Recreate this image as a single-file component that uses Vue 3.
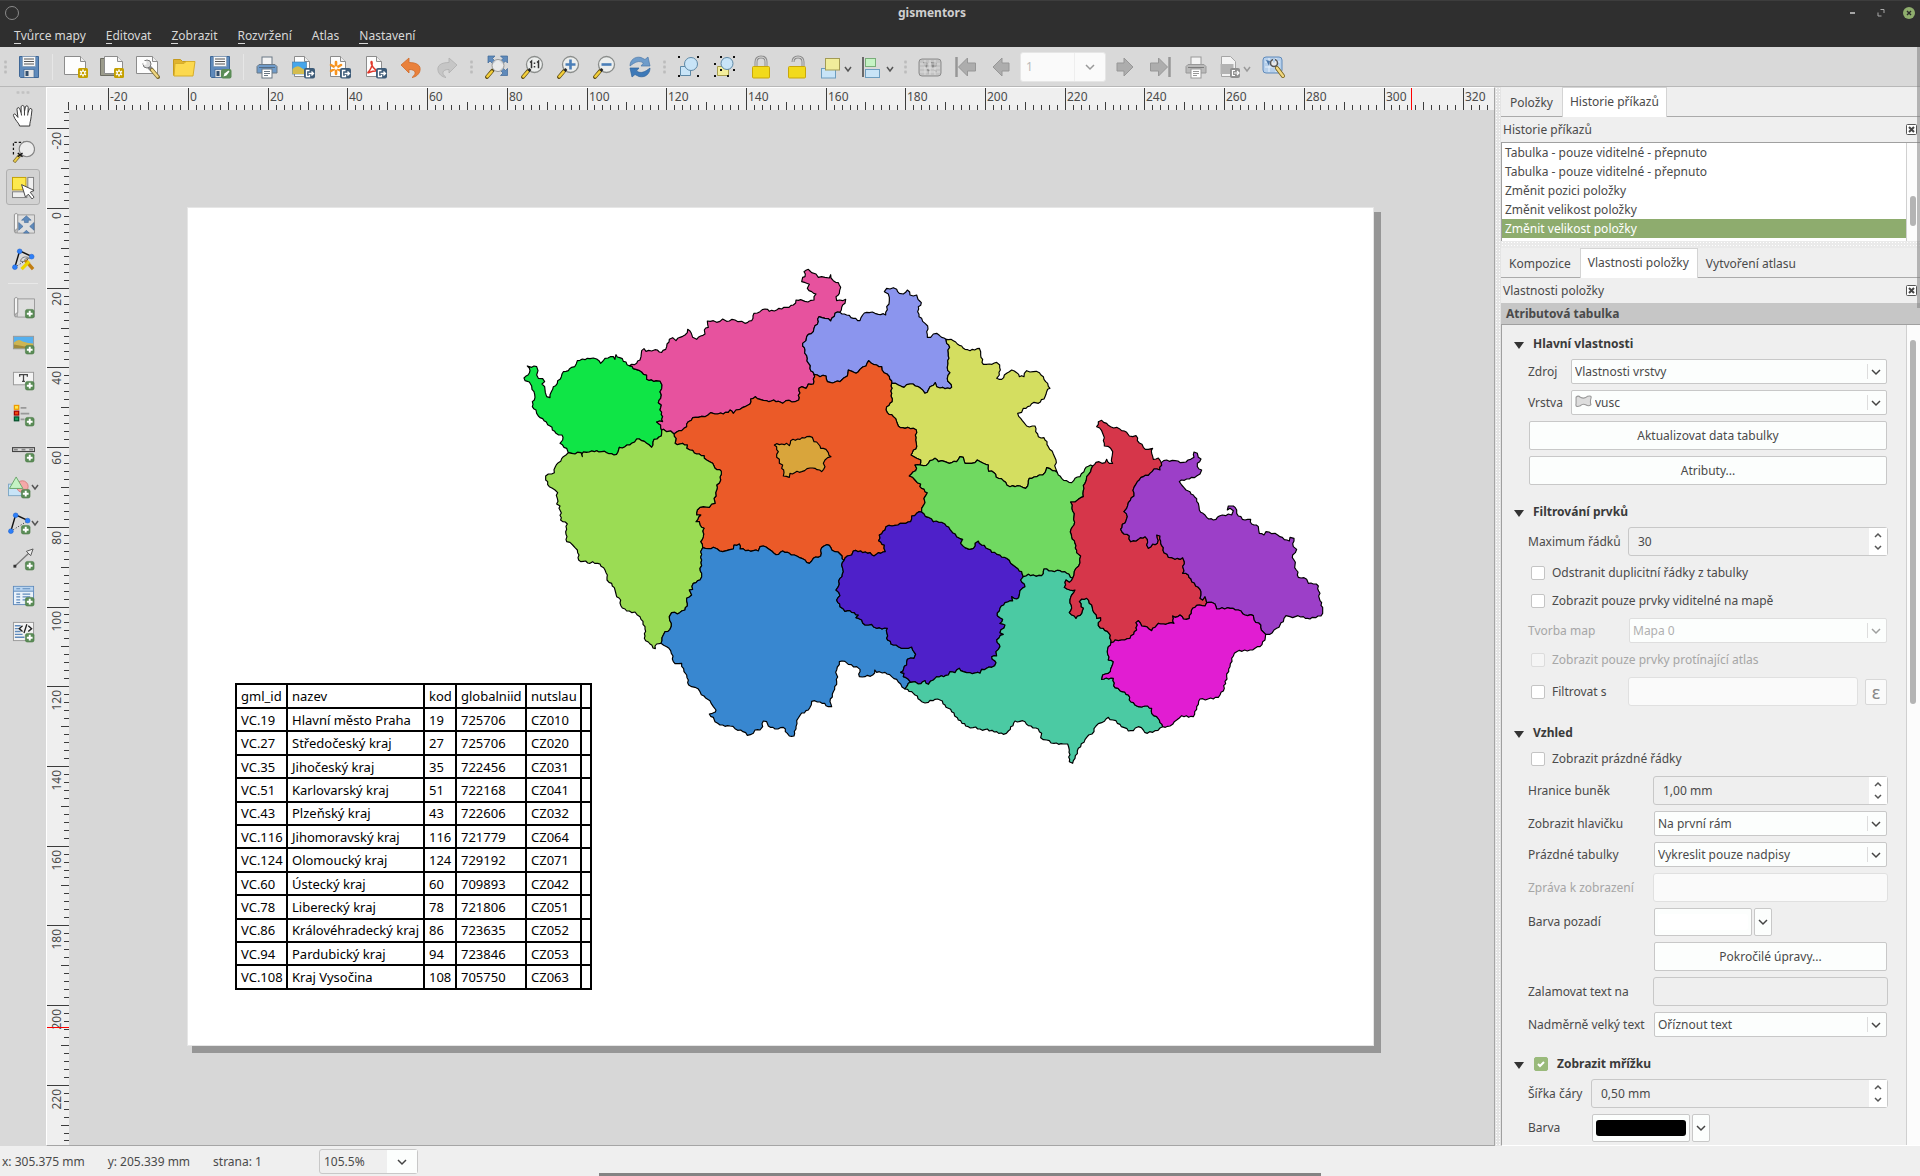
<script setup>
import { computed, onBeforeUnmount, onMounted, ref } from 'vue'

const menus = ['Tvůrce mapy', 'Editovat', 'Zobrazit', 'Rozvržení', 'Atlas', 'Nastavení']

const plus = '<rect x="14" y="14" width="9" height="9" rx="2" fill="#5a8c56" stroke="#4b7b48" stroke-width=".6"/><path d="M18.500 15.500v6M15.500 18.500h6" stroke="#fff" stroke-width="2"/>'
const star = '<rect x="14" y="13" width="10" height="10" rx="1.500" fill="#c4a000"/><path d="M19 14.500v7M16 16.200l6 3.600M22 16.200l-6 3.600" stroke="#fff" stroke-width="1.600"/><circle cx="19" cy="18" r="1.200" fill="#c4a000"/>'
const exp = '<rect x="13" y="13" width="11" height="10.500" rx="2" fill="#3d5b78"/><path d="M18.500 15.500h-3v6h3v-1.500M17.500 18.500h5M20.500 16.500l2 2-2 2" stroke="#fff" stroke-width="1.300" fill="none"/>'
const sheet = '<path d="M3.500 1.500h10l5 5v15h-15z" fill="#fdfdfd" stroke="#8c8c8c"/><path d="M13.500 1.500v5h5" fill="#eee" stroke="#8c8c8c"/>'
const floppy = '<path d="M2.500 1.500h19v21h-18l-1-1z" fill="#5f8abb" stroke="#3f6796"/><rect x="5.500" y="1.500" width="13" height="10" fill="#f8f8f8" stroke="#7a93ad" stroke-width=".6"/><path d="M7 4h10M7 6.500h10M7 9h10" stroke="#555"/><rect x="7" y="14.500" width="10" height="8" fill="#e4e4e4" stroke="#3f6796" stroke-width=".7"/><rect x="8.500" y="16" width="3" height="5" fill="#34506e"/>'
const handle = '<path d="M8.500 15.500L3 22" stroke="#5d4b12" stroke-width="3.800" stroke-linecap="round"/><path d="M7.800 16.500L3.300 21.600" stroke="#f4cf3a" stroke-width="2.400" stroke-linecap="round"/>'
const lens = handle + '<circle cx="14.500" cy="9.500" r="8" fill="#eceeed" stroke="#8a8d8b" stroke-width="1.300"/><path d="M8.500 16l2-2" stroke="#222" stroke-width="2.500"/>'
const printer = (b, g) => `<rect x="7" y="2" width="10" height="8" fill="#f3f3f3" stroke="${g}"/><path d="M4 9.500h16l2 2v6.500h-20v-6.500z" fill="${b}" stroke="${g}"/><path d="M4 12.500h16" stroke="#333" stroke-opacity=".45"/><rect x="7" y="14" width="10" height="9" fill="#fff" stroke="${g}"/><path d="M9 16.500h6M9 18.500h6M9 20.500h4" stroke="${g}"/>`
const nodes = '<path d="M3 20L8 3l13 6" fill="none" stroke="#111" stroke-width="1.500"/><path d="M3 20L21 9" stroke="#222" stroke-dasharray="1 2"/><g fill="#2d7ff9" stroke="#1d62cc" stroke-width=".6"><circle cx="3" cy="20" r="2.500"/><circle cx="8" cy="3.500" r="2.500"/><circle cx="20.500" cy="9" r="2.500"/></g>'
const scroll = '<path d="M5.500 3h18v19h-18z" fill="#dedede" stroke="#9a9a9a"/><path d="M2.500 2.500q2-2 3.500 0v15q-3.500 0-1.500 4.500-2 0-2-2z" fill="#f4f4f4" stroke="#8f8f8f"/>'
const corners = '<g fill="#111"><rect x="1" y="1" width="2" height="2"/><rect x="20" y="1" width="2" height="2"/><rect x="1" y="20" width="2" height="2"/><rect x="20" y="20" width="2" height="2"/></g>'
const lockBody = '<rect x="3.500" y="11.500" width="17" height="11.500" rx="1" fill="#f2da1b" stroke="#c9a70a"/>'
const arrowLeft = '<path d="M3 12l9-9v5h7v8h-7v5z" fill="#adadad" stroke="#979797"/>'
const arrowRight = '<path d="M21 12l-9-9v5H5v8h7v5z" fill="#adadad" stroke="#979797"/>'

const icons = {
  save: floppy,
  newPage: '<path d="M.500 1.500h16l5 5v13h-21z" fill="#fdfdfd" stroke="#8c8c8c"/><path d="M16.500 1.500v5h5" fill="#eee" stroke="#8c8c8c"/>' + star,
  duplicate: '<path d="M.500 3.500h17v17h-17z" fill="#9b9b8b" stroke="#6c6c62"/><path d="M4.500 1.500h13l5 5v12h-18z" fill="#fdfdfd" stroke="#8c8c8c"/><path d="M17.500 1.500v5h5" fill="#eee" stroke="#8c8c8c"/>' + star,
  manager: '<path d="M.500 1.500h16l5 5v12h-21z" fill="#fdfdfd" stroke="#8c8c8c"/><path d="M16.500 1.500v5h5" fill="#eee" stroke="#8c8c8c"/><path d="M13 12l3 3" stroke="#888" stroke-width="4"/><circle cx="11" cy="9" r="4" fill="#ddd" stroke="#777"/><path d="M6.500 5l4 1.500v3l-3 .5z" fill="#fdfdfd"/><path d="M16 15l6 7" stroke="#7b6a30" stroke-width="4" stroke-linecap="round"/><path d="M16 15l5.500 6.500" stroke="#eed580" stroke-width="2.400" stroke-linecap="round"/>',
  folder: '<path d="M1.500 20.500v-16h7l2 2h8v3" fill="#e0b32f" stroke="#c59a1d"/><path d="M3 8.500h9l2-2h9l-2 14.500H2z" fill="#fcd94f" stroke="#d6ad2b"/>',
  saveEdit: floppy + '<rect x="13" y="14" width="10.500" height="9.500" rx="2" fill="#5a8c56"/><path d="M15.500 21.500l1-3 4-3 1 1-3 4z" fill="#fff"/>',
  print: printer('#6f9bc9', '#6a7885'),
  image: sheet + '<rect x="1.500" y="7" width="14" height="12" fill="#45a5ea" stroke="#3d77a8" stroke-width=".6"/><path d="M1.500 19v-5q5-5 9-1l5 3v3z" fill="#d4bc4e"/>' + exp,
  svg: sheet + '<path d="M9 7v12M4 10l10 6M14 10l-10 6" stroke="#f7931e" stroke-width="2.600" stroke-linecap="round"/><circle cx="9" cy="13" r="1.700" fill="#fff"/>' + exp,
  pdf: sheet + '<path d="M4.500 18c3-3 5.500-8 4.500-11-1.500-2-2 4 5 9-5-.5-7 1.500-9.500 2" fill="none" stroke="#e0382c" stroke-width="1.500"/>' + exp,
  undo: '<path d="M2 10l8-7v4.500c8 0 12 3 11 8-.6 3.500-4 6.500-8 7 5-4 4-8-3-8V18z" fill="#e9813c" stroke="#cf6a28" stroke-width=".8"/>',
  redo: '<path d="M22 10l-8-7v4.500c-8 0-12 3-11 8 .6 3.500 4 6.500 8 7-5-4-4-8 3-8V18z" fill="#c6c6c6" stroke="#aeaeae" stroke-width=".8"/>',
  zoomFull: '<g fill="#5f8abb" stroke="#3f6796" stroke-width=".7"><path d="M4 1h7L8.500 3.500l3 3-2.500 2.500-3-3L4 8z"/><path d="M23.500 1h-7L19 3.500l-3 3L18.500 9l3-3 2 2z"/><path d="M23.500 20.500h-7L19 18l-3-3 2.500-2.500 3 3 2-2z"/></g>' + handle + '<circle cx="14" cy="10.500" r="6" fill="#ececec" fill-opacity=".85" stroke="#999"/>',
  zoomOne: lens + '<path d="M10 7.500l1.500-1.300v7M17 7.500l1.500-1.300v7" fill="none" stroke="#333" stroke-width="1.500"/><path d="M14.500 7.500v1.500M14.500 11v1.500" stroke="#333" stroke-width="1.500"/>',
  zoomIn: lens + '<path d="M14.500 4.500v10M9.500 9.500h10" stroke="#4b7fb8" stroke-width="2.600"/>',
  zoomOut: lens + '<path d="M9.500 9.500h10" stroke="#4b7fb8" stroke-width="2.600"/>',
  refresh: '<path d="M2 11C2 5 7 1 13 2.500l4 2L20 2l2 9h-9l2.500-3C11 5 7 7 2 11z" fill="#6f9cca" stroke="#4a78ab" stroke-width=".7"/><path d="M22 13c0 6-5 10-11 8.500l-4-2L4 22l-2-9h9l-2.500 3c4.500 3 8.500 1 13.500-3z" fill="#3d79b8" stroke="#2e6199" stroke-width=".7"/>',
  group: '<path d="M3.500 11.500h10v9h-10z" fill="#c8e4f7" stroke="#5d88a6"/><circle cx="14" cy="9" r="6.500" fill="#c8e4f7" stroke="#5d88a6"/>' + corners,
  ungroup: '<path d="M4.500 11.500h11v9h-11z" fill="#f4ee9b" stroke="#a69d4c"/><circle cx="14" cy="8.500" r="6" fill="#c8e4f7" stroke="#5d88a6"/><g fill="#111"><rect x="7" y="1" width="2" height="2"/><rect x="20" y="1" width="2" height="2"/><rect x="1" y="8" width="2" height="2"/><rect x="1" y="20" width="2" height="2"/><rect x="7" y="14" width="2" height="2"/><rect x="20" y="14" width="2" height="2"/><rect x="14" y="20" width="2" height="2"/></g>',
  lock: '<path d="M7 12V7q0-5 5-5t5 5v5" fill="none" stroke="#8d8d8d" stroke-width="3"/><path d="M7 12V7q0-5 5-5t5 5v5" fill="none" stroke="#dcdcdc"/>' + lockBody,
  unlock: '<path d="M8 7q0-5 5-5t5 5v5" fill="none" stroke="#8d8d8d" stroke-width="3"/><path d="M8 7q0-5 5-5t5 5v5" fill="none" stroke="#dcdcdc"/>' + lockBody,
  raise: '<rect x="1.500" y="13.500" width="14" height="9.500" fill="#c8e4f7" stroke="#6d9dbf"/><rect x="5.500" y="3.500" width="14" height="11.500" fill="#f1ed9b" stroke="#a39b54"/>',
  align: '<path d="M1 2v20" stroke="#444" stroke-width="1.500"/><rect x="3.500" y="3.500" width="10" height="8" fill="#c5f3c4" stroke="#7aae7a"/><rect x="3.500" y="14.500" width="14" height="8" fill="#c8e4f7" stroke="#6d9dbf"/>',
  atlas: '<rect x="1" y="4" width="22" height="17" rx="3" fill="#c3c3c3" stroke="#8b8b8b"/><path d="M5 7l5 1-1 5-2-1zM13 7l6 1-1 4-4 1zM9 14l3 1-2 4zM16 15l3 1-1 2z" fill="#8a8a8a"/><path d="M2 9h20M2 13h20M2 17h20M7 5v15M12 5v15M17 5v15" stroke="#e2e2e2" stroke-width=".8"/>',
  first: '<path d="M2.500 2v20" stroke="#979797" stroke-width="2.500"/><path d="M4.500 12l9-9v5h8v8h-8v5z" fill="#adadad" stroke="#979797"/>',
  prev: arrowLeft,
  next: arrowRight,
  last: '<path d="M21.500 2v20" stroke="#979797" stroke-width="2.500"/><path d="M19.500 12l-9-9v5h-8v8h8v5z" fill="#adadad" stroke="#979797"/>',
  printGray: printer('#b9b9b9', '#999'),
  exportGray: '<path d="M2.500 1.500h9l5 5v15h-14z" fill="#f3f3f3" stroke="#a5a5a5"/><rect x="1.500" y="9" width="13" height="10" fill="#b3b3b3"/><rect x="11" y="13" width="10" height="10" rx="2" fill="#8f8f8f"/><path d="M16 15.500h-2.500v5H16M15 18h5M18 16l2 2-2 2" stroke="#fff" stroke-width="1.200" fill="none"/>',
  atlasSettings: '<rect x="1" y="2" width="19" height="16" rx="3" fill="#b6cfea" stroke="#5f8abb"/><path d="M3 7h15M3 12h15M7 3v14M14 3v14" stroke="#e8f1fa"/><path d="M4 5l4 1-1 5zM13 11l4 2-3 3z" fill="#4a76a8"/><circle cx="12" cy="8" r="3.500" fill="#e8e8e8" stroke="#555" stroke-width="1.500"/><path d="M12 3.500v4" stroke="#b6cfea" stroke-width="2"/><path d="M15 13l6 8" stroke="#77621f" stroke-width="4" stroke-linecap="round"/><path d="M15 13l6 8" stroke="#f0d77f" stroke-width="2.400" stroke-linecap="round"/>',
  hand: '<path d="M8 23c-.5-3-5-6-6.500-11-.3-2 1.800-2 2.700-.5l2 2.500-1-8.500c0-2 2.300-2.300 2.900-.5L9.500 9V3c.3-2 2.800-2 3.200 0L13 8l1-5c.6-1.800 2.800-1.400 2.900.5L16.700 9l1.300-3.500c1-1.600 2.900-.8 2.800 1L20 13c-.3 4-1.500 6-1.500 10z" fill="#fff" stroke="#333" stroke-linejoin="round"/><path d="M9.500 9l.5 3M13 8v4M16.700 9l-.4 3" stroke="#333"/>',
  zoom: '<path d="M1.500 15V2.500H14" fill="none" stroke="#111" stroke-width="1.300" stroke-dasharray="2.500 2"/><path d="M8 16l-6 7" stroke="#7b6a30" stroke-width="3.500"/><path d="M7.500 16.500l-5 6" stroke="#eed04a" stroke-width="2"/><circle cx="15.500" cy="9.500" r="8" fill="#ececec" stroke="#858585" stroke-width="1.200"/><path d="M6 13.500l5 4M6 17.500l5-4" stroke="#111" stroke-width="1.500"/>',
  select: '<rect x="16.500" y="1.500" width="6" height="14" fill="#efefef" stroke="#808080"/><rect x=".500" y="16.500" width="15" height="6" fill="#efefef" stroke="#808080"/><rect x=".500" y="1.500" width="14" height="13" fill="#fde94e" stroke="#c4a000"/><path d="M10 9l4 13 3-3 4 5 2-2-4-5 4-2z" fill="#fff" stroke="#444"/>',
  moveContent: scroll + '<g fill="#5f8abb" stroke="#3f6796" stroke-width=".6"><path d="M15 4l5 4.500h-3V11h-4V8.500h-3zM7 11l4.500 4L7 19zM23 11l-4.500 4 4.500 4zM12 22l3-3 3 3z"/></g>',
  editNodes: nodes + '<path d="M9 14c0-5 7-6 9-3-4-1-5 1-5 3z" fill="#ddd" stroke="#777"/><path d="M14 13l8 9" stroke="#c17d11" stroke-width="3.500"/><path d="M18 14l-8 8" stroke="#edd400" stroke-width="3.500"/>',
  addMap: scroll + plus,
  addImage: '<rect x="1.500" y="4.500" width="21" height="13" fill="#55b0ee" stroke="#999"/><path d="M2 17v-6q5-5 9-1 6 2 11 2v5z" fill="#cdb552"/><path d="M2 13q10 2 20 3v1H2z" fill="#a18a3b"/>' + plus,
  addLabel: '<rect x="1.500" y="4.500" width="21" height="13" fill="#f3f3f3" stroke="#999"/><path d="M8 9V7h8v2M12 7v7M10.500 14h3" stroke="#444" stroke-width="1.300" fill="none"/>' + plus,
  addLegend: '<g stroke-width="1.300"><rect x="2.500" y="1.500" width="4.500" height="4" fill="#fce94f" stroke="#f09a00"/><rect x="2.500" y="7.500" width="4.500" height="4" fill="#ef4b12" stroke="#a40000"/><rect x="2.500" y="13.500" width="4.500" height="4" fill="#14a35d" stroke="#064f2c"/></g><path d="M9 4h6M9 10h9M9 16h4" stroke="#999" stroke-width="1.800"/>' + plus,
  addScale: '<rect x=".600" y="8" width="23" height="4" fill="#ddd" stroke="#444" stroke-width="1.200"/><path d="M2 10h4M10 10h4M18 10h4" stroke="#888" stroke-width="2"/>' + plus,
  addShape: '<rect x=".500" y="8.500" width="15" height="12" fill="#c8e4f7" stroke="#7fa8c5"/><circle cx="15" cy="11" r="6" fill="#f4a9a9" stroke="#d98080"/><path d="M8.500 1l7 12h-14z" fill="#c5f3c4" stroke="#6aa56a"/>' + plus,
  addNodes: nodes + plus,
  addArrow: '<path d="M3 19L18 5" stroke="#777" stroke-width="1.400"/><rect x="1.500" y="17.500" width="3" height="3" fill="#333"/><path d="M22 1l-2.500 7-4.500-4.500z" fill="#eee" stroke="#555"/>' + plus,
  addTable: '<rect x="1.500" y="2.500" width="21" height="19" fill="#eaf2fa" stroke="#5f8abb"/><rect x="2" y="3" width="20" height="4.500" fill="#b9d5f1"/><path d="M2 7.500h20" stroke="#5f8abb"/><path d="M4.500 5h4M11 5h8M4.500 10.500h4M11 10.500h8M4.500 13.500h4M11 13.500h8M4.500 16.500h4M11 16.500h4M4.500 19.500h4" stroke="#5f8abb" stroke-width="1.200"/>' + plus,
  addHtml: '<rect x="1.500" y="2.500" width="21" height="19" fill="#f3f3f3" stroke="#999"/><path d="M3 6h6M3 9h4M3 12h6M3 15h8M3 18h10" stroke="#5f8abb" stroke-width="1.500"/><path d="M11 6L7.500 9l3.500 3M17 6l3.500 3-3.500 3M15.500 4.500l-3 9" stroke="#222" stroke-width="1.400" fill="none"/>' + plus
}

const toolGroups = [
  [{ i: 'save', t: 'Uložit projekt' }],
  [{ i: 'newPage', t: 'Nové rozvržení' }, { i: 'duplicate', t: 'Duplikovat' }, { i: 'manager', t: 'Správce' }, { i: 'folder', t: 'Otevřít šablonu' }, { i: 'saveEdit', t: 'Uložit šablonu' }],
  [{ i: 'print', t: 'Tisk' }, { i: 'image', t: 'Export obrázku' }, { i: 'svg', t: 'Export SVG' }, { i: 'pdf', t: 'Export PDF' }, { i: 'undo', t: 'Zpět' }, { i: 'redo', t: 'Znovu' }],
  [{ i: 'zoomFull', t: 'Celý rozsah' }, { i: 'zoomOne', t: '100%' }, { i: 'zoomIn', t: 'Přiblížit' }, { i: 'zoomOut', t: 'Oddálit' }, { i: 'refresh', t: 'Obnovit' }],
  [{ i: 'group', t: 'Seskupit' }, { i: 'ungroup', t: 'Rozdělit' }, { i: 'lock', t: 'Zamknout' }, { i: 'unlock', t: 'Odemknout' }, { i: 'raise', t: 'Nahoru', drop: true }, { i: 'align', t: 'Zarovnat', drop: true }],
  [{ i: 'atlas', t: 'Náhled atlasu' }, { i: 'first', t: 'První' }, { i: 'prev', t: 'Předchozí' }]
]
const dividers = ['grip start', 'rule', 'rule', 'grip', 'grip', 'grip']
const toolsAfterPage = [{ i: 'next', t: 'Další' }, { i: 'last', t: 'Poslední' }, { i: 'printGray', t: 'Tisk atlasu' }, { i: 'exportGray', t: 'Export atlasu', drop: true }, { i: 'atlasSettings', t: 'Nastavení atlasu' }]

const sideTools = [
  [{ i: 'hand', t: 'Posun' }, { i: 'zoom', t: 'Lupa' }, { i: 'select', t: 'Výběr', on: true }, { i: 'moveContent', t: 'Posun obsahu' }, { i: 'editNodes', t: 'Úprava uzlů' }],
  [{ i: 'addMap', t: 'Mapa' }, { i: 'addImage', t: 'Obrázek' }, { i: 'addLabel', t: 'Popisek' }, { i: 'addLegend', t: 'Legenda' }, { i: 'addScale', t: 'Měřítko' }, { i: 'addShape', t: 'Tvar', drop: true }, { i: 'addNodes', t: 'Uzly', drop: true }, { i: 'addArrow', t: 'Šipka' }, { i: 'addTable', t: 'Tabulka' }, { i: 'addHtml', t: 'HTML' }]
]

const PX_PER_MM = 3.985
const hRuler = ref(null)
const vRuler = ref(null)
const rulerSize = ref({ w: 0, h: 0 })
function ticks(from, origin, length) {
  const out = []
  for (let mm = from; origin + mm * PX_PER_MM < length; mm += 2) {
    const pos = Math.round(origin + mm * PX_PER_MM)
    out.push({ mm, pos, label: mm % 20 === 0 && pos + 26 < length, size: mm % 20 === 0 ? 22 : mm % 10 === 0 ? 8 : 5 })
  }
  return out
}
const hTicks = computed(() => ticks(-30, 141, rulerSize.value.w))
const vTicks = computed(() => ticks(-24, 98, rulerSize.value.h))
const cursor = { x: 1364, y: 917 }
function measure() {
  rulerSize.value = { w: hRuler.value.clientWidth, h: vRuler.value.clientHeight }
}
onMounted(() => {
  measure()
  window.addEventListener('resize', measure)
})
onBeforeUnmount(() => window.removeEventListener('resize', measure))

/* Borders are kept as shared arcs; a region lists its arcs, negative = reversed. */
const arcs = {
  1: '205,608 200,595 180,580 188,570 186,555 168,550 150,528 132,512 115,498 108,480 97,470 97,455 105,442 102,425 95,408 88,396 75,392 72,384 84,375 90,362 82,348 95,352 110,350 114,362 110,375 115,385 128,386 134,395 126,402 134,410 136,428 140,440 150,443 154,425 160,410 172,400 184,380 190,365 205,362 215,352 224,350 232,332 270,326 290,327 302,340 315,325 340,320 345,328 348,314 388,347',
  2: '388,347 408,358 425,366 440,375 440,388 468,392 480,393 486,405 480,425 482,445 475,458 484,465 480,480 488,500 488,515 470,516 482,525 485,541',
  3: '485,541 484,558 462,568 455,592 440,580 425,572 410,567 395,580 375,590 358,592 354,606 342,615 320,608 290,602 268,606 250,606 247,620 243,608 225,612 205,608',
  4: '388,347 410,340 420,330 424,310 432,296 438,304 455,303 465,299 485,307 500,290 508,268 518,263 528,272 540,262 555,255 562,248 563,238 574,250 578,262 590,268 602,258 615,252 613,240 625,232 622,213 640,212 650,217 668,207 680,214 705,210 725,214 735,220 755,212 762,190 780,185 795,177 808,184 830,180 860,172 880,165 888,150 902,149 915,154 942,150 948,132 935,125 922,115 928,103 916,98 905,95 908,82 915,80 912,65 925,58 935,68 948,72 955,82 975,82 988,84 992,74 1000,92 1015,98 1022,112 1018,130 1008,140 1010,152 1037,148 1035,160 1025,172 1020,187',
  5: '1020,187 1005,190 992,213 975,205 957,200 955,215 942,235 940,245 920,260 918,272 908,280 915,300 922,325 930,355 942,373',
  6: '942,373 940,402 925,402 918,415 905,410 897,415 896,450 885,455 858,452 848,460 835,454 800,452 780,448 766,440 752,447 750,462 735,470 720,478 708,480 700,490 690,480 670,492 645,492 632,488 615,500 595,502 578,503 565,515 560,530 545,542 530,546 522,552',
  7: '522,552 512,543 500,545 490,538 485,541',
  8: '1020,187 1040,195 1060,205 1080,212 1088,195 1100,187 1125,190 1135,193 1157,195 1160,170 1168,152 1165,132 1153,125 1160,115 1180,113 1190,118 1198,130 1210,132 1222,120 1230,135 1250,135 1254,148 1264,158 1255,170 1257,200 1268,214 1283,228 1282,262 1292,262 1300,252 1310,250 1325,262 1338,268',
  9: '1338,268 1340,280 1349,292 1345,310 1344,340 1342,352 1350,368 1342,385 1355,412 1350,416 1320,414 1310,410 1306,398 1290,410 1285,420 1275,430 1268,420 1255,410 1230,402 1212,412 1195,405 1175,400',
  10: '1175,400 1168,380 1152,368 1145,350 1130,345 1112,338 1106,332 1098,348 1080,358 1068,370 1058,365 1045,360 1042,378 1030,385 1020,395 990,397 982,395 978,378 960,380 952,375 942,373',
  11: '1175,400 1175,430 1176,455 1160,470 1162,488 1180,500 1190,515 1195,528 1215,535 1240,535 1249,540 1247,570 1250,590 1240,600 1233,615 1250,625 1262,630 1260,645',
  12: '1260,645 1245,645 1250,655 1240,665 1228,678 1245,690 1262,702 1260,710 1282,728 1272,745 1275,758 1265,775 1265,786',
  13: '1265,786 1250,790 1235,798 1232,815 1210,820 1185,826 1158,830 1155,840 1138,855 1136,872 1153,885 1156,905 1135,908 1122,918 1110,908 1060,903 1055,915 1042,918 1032,932',
  14: '1032,932 1020,912 1005,905 992,892 980,884 965,893 962,918 940,925 928,940 915,930 905,925 890,918 868,910 848,903 828,914 815,903 805,896 790,888 780,890 775,903 745,901 720,897 718,882 702,885 700,897 680,902 668,905 652,897 640,892 625,896 608,893',
  15: '608,893 602,875 610,860 612,835 600,825 598,815 588,815 602,795 590,795 592,780 610,770 628,772 635,762 645,760 642,745 650,720 650,705 662,690 664,664 645,655 638,640 620,630 612,617 590,612 570,600 560,595 562,585 525,580 528,565 522,552',
  16: '205,608 190,620 175,638 166,650 163,668 137,678 137,690 148,710 165,720 173,728 170,762 180,768 182,810 202,822 197,845 200,875 218,885 232,900 236,930 270,940 278,935 300,942 315,960 322,975 321,990 335,1000 345,1020 348,1032 362,1050 363,1068 380,1083 405,1086 420,1100 435,1130 433,1165 450,1182 466,1196 470,1182 483,1180',
  17: '483,1180 490,1155 495,1145 510,1138 514,1120 508,1100 515,1088 532,1092 545,1083 555,1080 562,1060 560,1045 575,1035 568,1020 578,1018 580,1000 600,990 605,970 600,955 605,930 602,905 608,893',
  18: '483,1180 500,1190 512,1202 520,1235 525,1241 545,1240 552,1265 560,1275 566,1305 585,1312 600,1325 618,1345 630,1352 640,1370 648,1380 646,1386 628,1392 640,1402 645,1415 660,1425 690,1428 705,1436 722,1440 742,1456 760,1450 765,1440 780,1440 788,1430 790,1413 800,1415 805,1428 825,1437 850,1432 862,1450 868,1458 882,1458 888,1430 890,1412 900,1396 925,1380 930,1372 935,1354 960,1356 985,1370 995,1370 990,1355 1000,1325 1010,1295 1010,1260 1018,1235 1035,1234 1045,1243 1070,1250 1080,1258 1078,1280 1095,1280 1118,1275 1124,1260 1130,1267 1155,1267 1175,1280 1190,1288 1202,1302 1215,1317',
  19: '1215,1317 1222,1307 1232,1297',
  20: '1232,1297 1225,1288 1210,1280 1212,1270 1202,1267 1220,1245 1222,1228 1242,1225 1247,1213 1238,1200 1235,1191 1215,1195 1195,1190 1180,1185 1160,1165 1162,1135 1130,1135 1115,1123 1095,1125 1085,1110 1068,1103 1075,1095 1050,1082 1035,1084 1020,1070 1010,1050 1020,1037 1008,1020 1015,1010 1020,985 1030,965 1025,945 1032,932',
  21: '1338,268 1360,272 1372,282 1385,288 1395,298 1410,302 1438,295 1442,315 1450,343 1468,342 1490,337 1499,345 1498,375 1490,385 1505,388 1520,370 1535,360 1550,368 1558,380 1572,380 1580,362 1600,365 1618,368 1632,388 1650,415 1640,425 1635,440 1615,460 1602,457 1590,468 1570,475 1565,487 1553,490 1562,505 1572,518 1580,528 1605,528 1615,560 1632,563 1645,590 1660,612 1668,630 1667,655 1672,668',
  22: '1672,668 1658,662 1640,653 1635,668 1610,680 1588,685 1585,700 1577,715 1560,708 1530,710 1510,692 1495,685 1482,668 1466,664 1465,645 1450,640 1432,630 1415,640 1395,640 1390,622 1380,620 1370,635 1348,640 1335,635 1315,635 1305,625 1290,632 1285,640 1270,647 1260,645',
  23: '1672,668 1685,685 1700,692 1715,698 1725,685 1740,680 1752,665 1758,652 1772,645 1778,648',
  24: '1778,648 1772,665 1760,680 1755,700 1750,722 1750,740 1735,748 1725,756 1712,756 1716,775 1722,800 1722,825 1713,838 1715,860 1725,880 1730,908 1742,918 1740,938 1728,955 1722,975 1718,985',
  25: '1718,985 1700,970 1680,962 1655,963 1632,957 1625,977 1600,975 1585,973 1570,980',
  26: '1570,980 1565,965 1548,952 1532,940 1520,925 1500,915 1475,907 1465,897 1445,885 1435,873 1425,880 1420,895 1408,898 1395,893 1382,880 1388,868 1370,860 1358,848 1350,838 1335,822 1325,817 1300,815 1285,802 1265,786',
  27: '1570,980 1562,990 1575,1010 1560,1022 1558,1035 1550,1047 1535,1040 1538,1053 1515,1058 1500,1075 1492,1097 1508,1108 1500,1120 1515,1125 1500,1148 1510,1153 1490,1170 1500,1190 1488,1205 1490,1218 1475,1220 1488,1238 1475,1252 1445,1258 1440,1270 1410,1268 1390,1265 1378,1255 1365,1268 1350,1265 1345,1275 1310,1280 1300,1290 1285,1303 1275,1292 1255,1302 1245,1295 1232,1297',
  28: '1215,1317 1240,1330 1260,1350 1265,1355 1285,1357 1305,1348 1320,1350 1335,1365 1355,1385 1375,1410 1405,1430 1440,1437 1490,1445 1510,1453 1525,1443 1545,1413 1575,1415 1585,1427 1615,1437 1625,1450 1622,1463 1640,1470 1662,1480 1690,1482 1703,1482 1708,1500 1708,1535 1718,1540 1725,1525 1735,1495 1760,1462 1782,1445 1788,1428 1805,1418 1825,1402 1860,1423 1885,1443 1900,1442 1915,1430 1930,1440 1942,1450 1965,1442 1988,1430',
  29: '1988,1430 1978,1410 1970,1400 1955,1390 1955,1375 1935,1368 1915,1370 1900,1358 1888,1350 1885,1335 1860,1322 1845,1313 1840,1285 1805,1288 1808,1275 1825,1270 1835,1250 1840,1235 1825,1230 1822,1205 1825,1190 1833,1178',
  30: '1833,1178 1827,1150 1810,1135 1795,1127 1802,1103 1790,1105 1778,1080 1775,1065 1760,1045 1745,1047 1738,1055 1750,1075 1745,1090 1728,1105 1708,1088 1715,1075 1710,1050 1715,1035 1725,1020 1710,1020 1693,1012 1698,990 1708,997 1718,985',
  31: '1778,648 1788,637 1815,638 1820,628 1828,640 1838,640 1835,625 1838,605 1832,595 1813,588 1810,555 1805,542 1790,530 1795,515 1805,511 1820,520 1832,530 1850,532 1865,542 1880,547 1888,558 1908,557 1912,572 1930,592 1945,598 1958,595 1955,610 1960,628 1975,624 1984,638',
  32: '1984,638 1980,660 1962,657 1950,670 1930,680 1912,695 1902,712 1902,738 1885,758 1880,775 1872,785 1882,800 1878,812 1862,838 1872,852 1888,858 1892,875 1915,868 1935,860 1942,868 1940,885 1945,895 1958,882 1972,880 1970,855 1980,858 1982,880 1992,908 2005,922 2025,928 2048,923 2053,935 2048,970 2065,975 2075,995 2095,1012 2103,1025 2100,1045 2108,1050 2115,1040 2120,1058',
  33: '2120,1058 2115,1068 2098,1065 2078,1075 2068,1105 2050,1107 2040,1095 2025,1102 2018,1098 2022,1120 2005,1120 1990,1122 1975,1120 1965,1132 1955,1142 1940,1130 1925,1128 1915,1112 1908,1118 1910,1140 1890,1165 1865,1170 1845,1170 1833,1178',
  34: '1984,638 2000,630 2025,632 2050,637 2072,628 2082,622 2082,606 2092,610 2095,622 2103,627 2092,640 2092,650 2105,660 2100,672 2090,678 2060,687 2038,695 2045,705 2058,720 2070,725 2080,735 2095,760 2098,780 2115,795 2120,802 2140,810 2158,798 2185,792 2195,795 2200,782 2190,775 2182,780 2185,768 2200,768 2210,780 2215,798 2235,810 2252,808 2255,822 2275,830 2278,850 2292,855 2298,845 2325,850 2340,860 2368,873 2370,862 2382,865 2380,890 2390,898 2378,915 2385,945 2395,982 2420,988 2425,1000 2440,1002 2455,1008 2458,1045 2468,1080 2463,1098 2430,1107 2410,1100 2370,1100 2358,1097 2350,1115 2330,1135 2310,1153 2297,1153',
  35: '2297,1153 2284,1140 2282,1125 2262,1110 2260,1097 2235,1095 2215,1080 2190,1075 2150,1077 2145,1062 2135,1057 2120,1058',
  36: '2297,1153 2295,1170 2280,1190 2250,1200 2210,1205 2195,1225 2190,1250 2180,1280 2173,1315 2160,1335 2140,1347 2100,1347 2090,1370 2080,1400 2045,1397 2030,1410 2010,1428 1988,1430',
  37: '823,585 845,582 860,580 868,587 872,572 900,568 920,560 937,562 942,575 955,582 962,595 978,598 985,608 993,620 975,630 970,640 975,650 965,665 945,655 930,654 905,665 870,670 868,682 850,678 852,668 845,655 848,645 838,640 838,628 830,622 835,605 823,585'
}
const areas = [
  { name: 'Karlovarský kraj', fill: '#0fe546', arcs: [2, 3, 1] },
  { name: 'Ústecký kraj', fill: '#e7529e', arcs: [4, 5, 6, 7, -2] },
  { name: 'Liberecký kraj', fill: '#8b95ee', arcs: [8, 9, 10, -5] },
  { name: 'Královéhradecký kraj', fill: '#d4de60', arcs: [21, 22, -11, -9] },
  { name: 'Středočeský kraj', fill: '#eb5a28', arcs: [11, 12, 13, 14, 15, -6, -10] },
  { name: 'Plzeňský kraj', fill: '#9bdc54', arcs: [16, 17, 15, 7, 3] },
  { name: 'Jihočeský kraj', fill: '#3887d0', arcs: [18, 19, 20, 14, -17] },
  { name: 'Kraj Vysočina', fill: '#4e20c9', arcs: [-13, -26, 27, 20] },
  { name: 'Pardubický kraj', fill: '#70d961', arcs: [23, 24, 25, 26, -12, -22] },
  { name: 'Jihomoravský kraj', fill: '#4bcaa3', arcs: [28, 29, 30, 25, 27, -19] },
  { name: 'Olomoucký kraj', fill: '#d6364a', arcs: [31, 32, 33, 30, -24] },
  { name: 'Moravskoslezský kraj', fill: '#9c3fc8', arcs: [34, 35, -32] },
  { name: 'Zlínský kraj', fill: '#e11dd2', arcs: [36, 29, -33, -35] },
  { name: 'Hlavní město Praha', fill: '#d9a53b', arcs: [37] }
]
/* Break long straight stretches with a small repeatable offset. */
function roughen(line) {
  const p = line.split(' ').map(s => s.split(',').map(Number))
  const out = [p[0]]
  for (let k = 1; k < p.length; k++) {
    const [ax, ay] = p[k - 1]
    const [bx, by] = p[k]
    const len = Math.hypot(bx - ax, by - ay)
    const n = Math.floor(len / 7)
    for (let s = 1; s < n; s++) {
      const f = s / n
      const d = ((ax * 13 + by * 7 + s * 11) % 7) - 3
      out.push([Math.round(ax + (bx - ax) * f - (by - ay) / len * d), Math.round(ay + (by - ay) * f + (bx - ax) / len * d)])
    }
    out.push(p[k])
  }
  return out
}
const lines = Object.fromEntries(Object.entries(arcs).map(([k, v]) => [k, roughen(v)]))
const shape = ids => ids.flatMap(n => (n < 0 ? [...lines[-n]].reverse() : lines[n])).map(p => p.join()).join(' ')

const columns = ['gml_id', 'nazev', 'kod', 'globalniid', 'nutslau', '']
const rows = [
  ['VC.19', 'Hlavní město Praha', '19', '725706', 'CZ010', ''],
  ['VC.27', 'Středočeský kraj', '27', '725706', 'CZ020', ''],
  ['VC.35', 'Jihočeský kraj', '35', '722456', 'CZ031', ''],
  ['VC.51', 'Karlovarský kraj', '51', '722168', 'CZ041', ''],
  ['VC.43', 'Plzeňský kraj', '43', '722606', 'CZ032', ''],
  ['VC.116', 'Jihomoravský kraj', '116', '721779', 'CZ064', ''],
  ['VC.124', 'Olomoucký kraj', '124', '729192', 'CZ071', ''],
  ['VC.60', 'Ústecký kraj', '60', '709893', 'CZ042', ''],
  ['VC.78', 'Liberecký kraj', '78', '721806', 'CZ051', ''],
  ['VC.86', 'Královéhradecký kraj', '86', '723635', 'CZ052', ''],
  ['VC.94', 'Pardubický kraj', '94', '723846', 'CZ053', ''],
  ['VC.108', 'Kraj Vysočina', '108', '705750', 'CZ063', '']
]
const history = ['Tabulka - pouze viditelné - přepnuto', 'Tabulka - pouze viditelné - přepnuto', 'Změnit pozici položky', 'Změnit velikost položky', 'Změnit velikost položky']

const groups = [
  { id: 'source', title: 'Hlavní vlastnosti', fields: [
    { type: 'select', label: 'Zdroj', value: 'Vlastnosti vrstvy' },
    { type: 'select', label: 'Vrstva', value: 'vusc', layer: true },
    { type: 'button', value: 'Aktualizovat data tabulky', wide: true },
    { type: 'button', value: 'Atributy...', wide: true }] },
  { id: 'filter', title: 'Filtrování prvků', fields: [
    { type: 'spin', label: 'Maximum řádků', value: '30' },
    { type: 'check', label: 'Odstranit duplicitní řádky z tabulky' },
    { type: 'check', label: 'Zobrazit pouze prvky viditelné na mapě' },
    { type: 'select', label: 'Tvorba map', value: 'Mapa 0', off: true },
    { type: 'check', label: 'Zobrazit pouze prvky protínající atlas', off: true },
    { type: 'expression', label: 'Filtrovat s' }] },
  { id: 'look', title: 'Vzhled', fields: [
    { type: 'check', label: 'Zobrazit prázdné řádky' },
    { type: 'spin', label: 'Hranice buněk', value: '1,00 mm' },
    { type: 'select', label: 'Zobrazit hlavičku', value: 'Na první rám' },
    { type: 'select', label: 'Prázdné tabulky', value: 'Vykreslit pouze nadpisy' },
    { type: 'text', label: 'Zpráva k zobrazení', off: true },
    { type: 'color', label: 'Barva pozadí', value: '#ffffff' },
    { type: 'button', value: 'Pokročilé úpravy...' },
    { type: 'text', label: 'Zalamovat text na' },
    { type: 'select', label: 'Nadměrně velký text', value: 'Oříznout text' }] },
  { id: 'lattice', title: 'Zobrazit mřížku', checked: true, fields: [
    { type: 'spin', label: 'Šířka čáry', value: '0,50 mm' },
    { type: 'color', label: 'Barva', value: '#000000' }] }
]
</script>

<template>
  <div class="app">
    <header class="top">
      <div class="titlebar">
        <span class="app-dot"></span>
        <h1>gismentors</h1>
        <div class="win">
          <button type="button" aria-label="Minimalizovat"><svg viewBox="0 0 12 12"><path d="M3 6h5" stroke="#ccc" stroke-width="1.500" /></svg></button>
          <button type="button" aria-label="Obnovit"><svg viewBox="0 0 12 12"><path d="M5.500 2.500H9v3.500M3 5.500V9h3.500" stroke="#aaa" fill="none" /></svg></button>
          <button type="button" aria-label="Zavřít"><svg viewBox="0 0 12 12"><circle cx="6" cy="6" r="6" fill="#8fae6d" /><path d="M4 4l4 4M8 4l-4 4" stroke="#2b2b2b" stroke-width="1.400" /></svg></button>
        </div>
      </div>
      <nav class="menu">
        <button v-for="m in menus" :key="m" type="button"><span :class="{ key: m !== 'Atlas' }">{{ m[0] }}</span>{{ m.slice(1) }}</button>
      </nav>
    </header>

    <div class="toolbar">
      <template v-for="(g, gi) in toolGroups" :key="gi">
        <span class="sep" :class="dividers[gi]"></span>
        <button v-for="b in g" :key="b.i" type="button" class="tool" :class="{ drop: b.drop }" :aria-label="b.t">
          <svg class="ico" viewBox="0 0 24 24" v-html="icons[b.i]"></svg>
          <svg v-if="b.drop" class="tiny" viewBox="0 0 8 8"><path d="M1 2l3 4 3-4" fill="none" stroke="#555" stroke-width="1.500" /></svg>
        </button>
      </template>
      <div class="page-pick">
        <input type="text" value="1" aria-label="Stránka atlasu" disabled>
        <button type="button" aria-label="Vybrat stránku" disabled><svg viewBox="0 0 10 10"><path d="M1 3l4 4 4-4" fill="none" stroke="#999" stroke-width="1.500" /></svg></button>
      </div>
      <button v-for="b in toolsAfterPage" :key="b.i" type="button" class="tool" :class="{ drop: b.drop }" :aria-label="b.t">
        <svg class="ico" viewBox="0 0 24 24" v-html="icons[b.i]"></svg>
        <svg v-if="b.drop" class="tiny" viewBox="0 0 8 8"><path d="M1 2l3 4 3-4" fill="none" stroke="#999" stroke-width="1.500" /></svg>
      </button>
    </div>

    <div class="main">
      <aside class="side">
        <span class="side-dots"></span>
        <template v-for="(g, gi) in sideTools" :key="gi">
          <hr v-if="gi">
          <button v-for="b in g" :key="b.i" type="button" :class="{ on: b.on, drop: b.drop }" :aria-label="b.t">
            <svg class="ico" viewBox="0 0 24 24" v-html="icons[b.i]"></svg>
            <svg v-if="b.drop" class="tiny" viewBox="0 0 8 8"><path d="M1 2l3 4 3-4" fill="none" stroke="#555" stroke-width="1.500" /></svg>
          </button>
        </template>
      </aside>

      <section class="view">
        <svg ref="hRuler" class="ruler-h">
          <g v-for="t in hTicks" :key="t.mm">
            <rect :x="t.pos" :y="22 - t.size" width="1" :height="t.size" />
            <text v-if="t.label" :x="t.pos + 2" y="13">{{ t.mm }}</text>
          </g>
          <rect class="mark" :x="cursor.x" y="0" width="1" height="22" />
        </svg>
        <div class="lower">
          <svg ref="vRuler" class="ruler-v">
            <g v-for="t in vTicks" :key="t.mm">
              <rect :x="22 - t.size" :y="t.pos" :width="t.size" height="1" />
              <text v-if="t.label" text-anchor="end" :transform="`translate(14 ${t.pos + 4}) rotate(-90)`">{{ t.mm }}</text>
            </g>
            <rect class="mark" x="0" :y="cursor.y" width="22" height="1" />
          </svg>
          <div class="canvas">
            <div class="page">
              <svg class="map" viewBox="0 0 2520 1590" role="img" aria-label="Kraje">
                <polygon v-for="a in areas" :key="a.name" :points="shape(a.arcs)" :fill="a.fill" />
              </svg>
              <table>
                <colgroup><col class="c1"><col class="c2"><col class="c3"><col class="c4"><col class="c5"><col class="c6"></colgroup>
                <thead><tr><th v-for="c in columns" :key="c" scope="col">{{ c }}</th></tr></thead>
                <tbody><tr v-for="r in rows" :key="r[0]"><td v-for="(c, i) in r" :key="i">{{ c }}</td></tr></tbody>
              </table>
            </div>
          </div>
        </div>
      </section>

      <div class="splitter"></div>

      <aside class="dock">
        <div class="tabs">
          <button type="button">Položky</button>
          <button type="button" class="on">Historie příkazů</button>
        </div>
        <div class="dock-title"><h2>Historie příkazů</h2>
          <button type="button" aria-label="Zavřít panel"><svg viewBox="0 0 11 11"><rect x=".500" y=".500" width="10" height="10" rx="1" fill="#fff" stroke="#555" /><path d="M3 3l5 5M8 3l-5 5" stroke="#444" stroke-width="2" /></svg></button>
        </div>
        <div class="history">
          <ul><li v-for="(h, i) in history" :key="i" :class="{ on: i === history.length - 1 }">{{ h }}</li></ul>
          <div class="bar"><span class="thumb short"></span></div>
        </div>
        <div class="hsplit"></div>
        <div class="tabs second">
          <button type="button">Kompozice</button>
          <button type="button" class="on">Vlastnosti položky</button>
          <button type="button">Vytvoření atlasu</button>
        </div>
        <div class="dock-title"><h2>Vlastnosti položky</h2>
          <button type="button" aria-label="Zavřít panel"><svg viewBox="0 0 11 11"><rect x=".500" y=".500" width="10" height="10" rx="1" fill="#fff" stroke="#555" /><path d="M3 3l5 5M8 3l-5 5" stroke="#444" stroke-width="2" /></svg></button>
        </div>
        <h3 class="band">Atributová tabulka</h3>
        <div class="props">
          <form @submit.prevent>
            <section v-for="g in groups" :key="g.id" class="group" :class="g.id">
              <h4>
                <svg class="tri" viewBox="0 0 10 7"><path d="M0 0h10L5 7z" fill="#333" /></svg>
                <label v-if="g.checked"><input type="checkbox" checked>{{ g.title }}</label>
                <span v-else>{{ g.title }}</span>
              </h4>
              <div v-for="(f, fi) in g.fields" :key="fi" class="field" :class="[f.type, { off: f.off, wide: f.wide }]">
                <label v-if="f.type === 'check'"><input type="checkbox" :disabled="f.off">{{ f.label }}</label>
                <label v-else-if="f.type === 'expression'"><input type="checkbox">{{ f.label }}</label>
                <label v-else-if="f.label" :for="g.id + fi">{{ f.label }}</label>
                <span v-else-if="!f.wide"></span>

                <div v-if="f.type === 'select'" class="combo" :class="{ layer: f.layer }">
                  <select :id="g.id + fi" :disabled="f.off"><option>{{ f.value }}</option></select>
                  <svg v-if="f.layer" class="layer-ico" viewBox="0 0 16 12"><path d="M1 2q2-2 4 0 4 2 7-1 4-1 3 2-1 3 0 6-2 2-5 0-3-1-5 1-5 2-4-2z" fill="#ddd" stroke="#999" /></svg>
                  <svg class="chev" viewBox="0 0 10 10"><path d="M1 3l4 4 4-4" fill="none" stroke="#444" stroke-width="1.500" /></svg>
                </div>
                <button v-else-if="f.type === 'button'" type="button" class="push">{{ f.value }}</button>
                <div v-else-if="f.type === 'spin'" class="spinbox">
                  <input :id="g.id + fi" type="text" :value="f.value">
                  <div>
                    <button type="button" aria-label="Zvýšit"><svg viewBox="0 0 8 6"><path d="M1 5l3-3 3 3" fill="none" stroke="#555" stroke-width="1.500" /></svg></button>
                    <button type="button" aria-label="Snížit"><svg viewBox="0 0 8 6"><path d="M1 1l3 3 3-3" fill="none" stroke="#555" stroke-width="1.500" /></svg></button>
                  </div>
                </div>
                <input v-else-if="f.type === 'text'" :id="g.id + fi" type="text" class="entry" :disabled="f.off">
                <div v-else-if="f.type === 'expression'" class="expr">
                  <input type="text" class="entry" aria-label="Výraz filtru" disabled>
                  <button type="button" class="eps" aria-label="Výraz" disabled>ε</button>
                </div>
                <div v-else-if="f.type === 'color'" class="colour">
                  <button :id="g.id + fi" type="button" class="swatch"><span :style="{ background: f.value }"></span></button>
                  <button type="button" class="more" aria-label="Možnosti barvy"><svg viewBox="0 0 10 10"><path d="M1 3l4 4 4-4" fill="none" stroke="#444" stroke-width="1.500" /></svg></button>
                </div>
              </div>
            </section>
          </form>
          <div class="bar"><span class="thumb long"></span></div>
        </div>
      </aside>
    </div>

    <footer class="status">
      <span>x: 305.375 mm</span>
      <span>y: 205.339 mm</span>
      <span>strana: 1</span>
      <div class="zoom">
        <input type="text" value="105.5%" aria-label="Měřítko zobrazení">
        <button type="button" aria-label="Vybrat měřítko"><svg viewBox="0 0 10 10"><path d="M1 3l4 4 4-4" fill="none" stroke="#444" stroke-width="1.500" /></svg></button>
      </div>
    </footer>
    <span class="edge-right"></span>
    <span class="edge-bottom"></span>
  </div>
</template>

<style>
body { margin: 0; }
</style>

<style scoped>
* { box-sizing: border-box; }
.app {
  position: relative;
  display: flex;
  flex-direction: column;
  height: 100vh;
  overflow: hidden;
  background: #efefef;
  color: #4a4a4a;
  font: 12px/16px "Noto Sans", sans-serif;
}
button, input, select { font: inherit; color: inherit; margin: 0; padding: 0; border: 0; background: none; outline: 0; }
h1, h2, h3, h4, ul { margin: 0; padding: 0; font-size: 12px; font-weight: 400; list-style: none; }
svg { display: block; }

.top { flex: none; background: #2f2f2f; border-top: 1px solid #3d3d3d; color: #d8d8d8; height: 47px; }
.titlebar { display: flex; align-items: center; height: 23px; padding: 0 5px; }
.app-dot { width: 14px; height: 14px; margin-right: 5px; border: 1px solid #8a8a8a; border-radius: 50%; }
.titlebar h1 { flex: 1; text-align: center; font-weight: 700; color: #d0d0d0; }
.win { display: flex; gap: 16px; padding-left: 7px; }
.win button, .win svg { width: 12px; height: 12px; }
.menu { display: flex; padding: 1px 0 0 4px; }
.menu button { padding: 3px 10px; line-height: 16px; }
.menu .key { border-bottom: 1px solid #d8d8d8; display: inline-block; line-height: 14px; }

.toolbar { flex: none; display: flex; align-items: center; height: 40px; background: #d9d9d9; border-bottom: 1px solid #b8b8b8; }
.tool { flex: none; display: flex; align-items: center; justify-content: center; width: 36px; height: 38px; }
.tool.drop { width: 42px; }
.ico { flex: none; width: 24px; height: 24px; }
.tiny { width: 8px; height: 8px; margin-top: 4px; }
.sep { flex: none; width: 13px; }
.sep.start { width: 11px; }
.sep.grip { height: 16px; background: radial-gradient(circle, #bcbcbc 1px, transparent 2px) center / 5px 5px repeat-y; }
.sep.rule { width: 11px; height: 26px; background: linear-gradient(#e6e6e6, #e6e6e6) center / 1px 100% no-repeat; }
.page-pick { flex: none; display: flex; width: 86px; height: 30px; background: #fafafa; border: 1px solid #e6e6e6; border-radius: 3px; }
.page-pick input { width: 54px; padding-left: 5px; color: #b9b9b9; border-right: 1px solid #eee; }
.page-pick button { flex: 1; display: grid; place-items: center; }
.page-pick svg, .zoom svg, .more svg { width: 10px; height: 10px; }

.main { flex: 1; min-height: 0; display: flex; }
.side { flex: none; width: 46px; background: #d9d9d9; display: flex; flex-direction: column; align-items: center; }
.side-dots { width: 16px; height: 10px; background: radial-gradient(circle, #c2c2c2 1px, transparent 2px) center / 5px 5px repeat-x; }
.side button { flex: none; width: 34px; height: 36px; display: flex; align-items: center; justify-content: center; border: 1px solid transparent; border-radius: 3px; }
.side button.on { background: #d2d2d2; border-color: #b0b0b0; }
.side hr { width: 30px; height: 1px; margin: 6px 0 5px; border: 0; background: #e8e8e8; }
.side .ico { width: 23px; height: 23px; }
.side .tiny { margin: 0; }

.view { flex: 1; min-width: 0; display: flex; flex-direction: column; border-left: 1px solid #fff; border-top: 1px solid #fff; border-right: 1px solid #a5a5a5; border-bottom: 1px solid #a5a5a5; }
.ruler-h { flex: none; width: 100%; height: 22px; background: #efefef; }
.ruler-v { flex: none; width: 22px; height: 100%; background: #efefef; }
.ruler-h rect, .ruler-v rect { fill: #3c3c3c; }
.ruler-h .mark, .ruler-v .mark { fill: #f00; }
.view text { font-size: 12px; fill: #4a4a4a; }
.lower { flex: 1; min-height: 0; display: flex; }
.canvas { flex: 1; min-width: 0; overflow: hidden; background: #d7d7d7; padding: 98px 0 0 119px; }
.page { position: relative; width: 1185px; height: 837px; background: #fff; box-shadow: 0 0 0 1px #e6e6e6, 6px 6px 0 2px #969696; }
.map { position: absolute; left: 312px; top: 42px; width: 840px; height: 530px; }
.map polygon { stroke: #000; stroke-width: 3.5; stroke-linejoin: round; }
.page table { position: absolute; left: 47px; top: 475px; width: 355px; height: 307px; table-layout: fixed; border-collapse: collapse; color: #000; font-size: 13px; line-height: 16px; }
.page thead tr { height: 24px; }
.page th, .page td { padding: 0 0 0 4px; border: 2px solid #000; font-weight: 400; text-align: left; white-space: nowrap; }
.c1 { width: 51px; } .c2 { width: 137px; } .c3 { width: 32px; } .c4 { width: 70px; } .c5 { width: 55px; } .c6 { width: 10px; }

.splitter { flex: none; width: 6px; background: radial-gradient(circle, #fff 1px, transparent 1px) 0 0 / 3px 3px #e4e4e4; }
.hsplit { flex: none; height: 7px; background: radial-gradient(circle, #fff 1px, transparent 1px) 0 0 / 3px 3px #eaeaea; }
.dock { flex: none; width: 419px; display: flex; flex-direction: column; overflow: hidden; }
.tabs { flex: none; display: flex; height: 30px; border-bottom: 1px solid #aaa; }
.tabs button { padding: 2px 8px 0; border: 1px solid transparent; border-bottom: 0; }
.tabs button.on { background: #fff; border-color: #d4d4d4; margin-bottom: -1px; padding: 0 7px 2px; }
.tabs.second button { padding: 2px 8px 0 7px; }
.tabs.second button.on { padding: 0 8px 2px 7px; }
.dock-title { flex: none; display: flex; align-items: center; justify-content: space-between; height: 25px; padding: 0 3px 0 2px; }
.dock-title svg { width: 11px; height: 11px; }
.history { flex: none; display: flex; height: 99px; border-top: 1px solid #a0a0a0; border-left: 1px solid #a0a0a0; background: #fff; }
.history ul { flex: 1; }
.history li { height: 19px; line-height: 19px; padding-left: 3px; }
.history li.on { background: #8eac6e; color: #fff; }
.bar { flex: none; width: 14px; border-left: 1px solid #d0d0d0; background: #fcfcfc; }
.thumb { display: block; width: 6px; margin-left: 3px; border-radius: 3px; background: #b4b4b4; }
.thumb.short { height: 30px; margin-top: 53px; }
.thumb.long { height: 364px; margin-top: 15px; }
.band { flex: none; height: 22px; line-height: 21px; padding-left: 5px; background: #c6c6c6; border-bottom: 1px solid #a0a0a0; font-weight: 700; }
.props { flex: 1; min-height: 0; display: flex; border-left: 1px solid #a0a0a0; border-bottom: 1px solid #fff; }
.props form { flex: 1; padding: 4px 18px 0 26px; overflow: hidden; }

.group { display: flex; flex-direction: column; gap: 6px; margin-bottom: 12px; }
h4 { display: flex; align-items: center; gap: 9px; height: 30px; margin: 0 0 -6px -14px; font-weight: 700; color: #3a3a3a; }
.tri { width: 10px; height: 7px; margin-top: 3px; }
.group label { display: flex; align-items: center; white-space: nowrap; }
.field { display: grid; grid-template-columns: var(--label) 1fr; align-items: center; }
.source { --label: 42px; }
.filter { --label: 100px; }
.look { --label: 125px; }
.lattice { --label: 63px; }
.field.wide, .field.check { grid-template-columns: 1fr; }
.field.check { height: 22px; }
.field.off { color: #a6a6a6; }
input[type="checkbox"] { appearance: none; width: 14px; height: 14px; margin: 0 7px 0 3px; border: 1px solid #c4c4c4; border-radius: 2px; background: #fff; }
input[type="checkbox"]:disabled { background: #f5f5f5; border-color: #dcdcdc; }
h4 input[type="checkbox"] { margin: 0 9px 0 1px; border-color: #9aba7b; background: url("data:image/svg+xml,%3Csvg xmlns='http://www.w3.org/2000/svg' viewBox='0 0 12 12'%3E%3Cpath d='M3 6l2 2 4-4' fill='none' stroke='white' stroke-width='2'/%3E%3C/svg%3E") #9aba7b; }
.combo { position: relative; height: 25px; margin: 0 1px; }
.combo select { appearance: none; width: 100%; height: 25px; padding-left: 3px; border: 1px solid #c8c8c8; border-radius: 2px; background: linear-gradient(#ddd, #ddd) right 18px center / 1px 15px no-repeat #fcfefd; opacity: 1; }
.combo.layer select { padding-left: 23px; }
.layer-ico { position: absolute; left: 4px; top: 5px; width: 17px; height: 13px; }
.chev { position: absolute; right: 6px; top: 8px; width: 10px; height: 10px; }
.off .combo select { border-color: #dedede; color: #b0b0b0; }
.off .chev { opacity: .5; }
.push { height: 29px; margin: 0 1px; border: 1px solid #c8c8c8; border-radius: 2px; background: #fcfefd; }
.spinbox { display: flex; height: 29px; border: 1px solid #c8c8c8; border-radius: 3px; }
.spinbox input { flex: 1; min-width: 0; padding-left: 9px; }
.spinbox div { width: 18px; display: flex; flex-direction: column; background: #fff; }
.spinbox div button { flex: 1; display: grid; place-items: center; }
.spinbox svg { width: 8px; height: 6px; }
.entry { width: 100%; min-width: 0; height: 29px; padding: 0 8px; border: 1px solid #c8c8c8; border-radius: 3px; }
.entry:disabled { background: #fafafa; border-color: #e0e0e0; }
.expr { display: flex; align-items: center; gap: 7px; padding-right: 1px; }
.eps { flex: none; width: 22px; height: 26px; border: 1px solid #d8d8d8; border-radius: 2px; background: #fafafa; color: #888; font-size: 18px; line-height: 20px; }
.colour { display: flex; gap: 2px; margin-left: 1px; height: 28px; }
.swatch { width: 98px; height: 28px; padding: 5px 3px; border: 1px solid #c8c8c8; border-radius: 2px; background: #fcfefd; }
.swatch span { display: block; height: 16px; border-radius: 3px; }
.more { width: 18px; height: 28px; border: 1px solid #c8c8c8; border-radius: 2px; background: #fcfefd; display: grid; place-items: center; }

.status { flex: none; display: flex; align-items: center; height: 30px; padding: 1px 2px 0; gap: 23px; }
.zoom { display: flex; width: 99px; height: 25px; margin-left: 34px; border: 1px solid #c8c8c8; border-radius: 3px; }
.zoom input { width: 67px; padding-left: 4px; }
.zoom button { flex: 1; display: grid; place-items: center; background: #fcfefd; }
.edge-right { position: absolute; right: 0; top: 47px; width: 3px; height: 261px; background: rgba(120, 120, 120, .5); }
.edge-bottom { position: absolute; left: 599px; bottom: 0; width: 722px; height: 3px; background: #838383; }
</style>
